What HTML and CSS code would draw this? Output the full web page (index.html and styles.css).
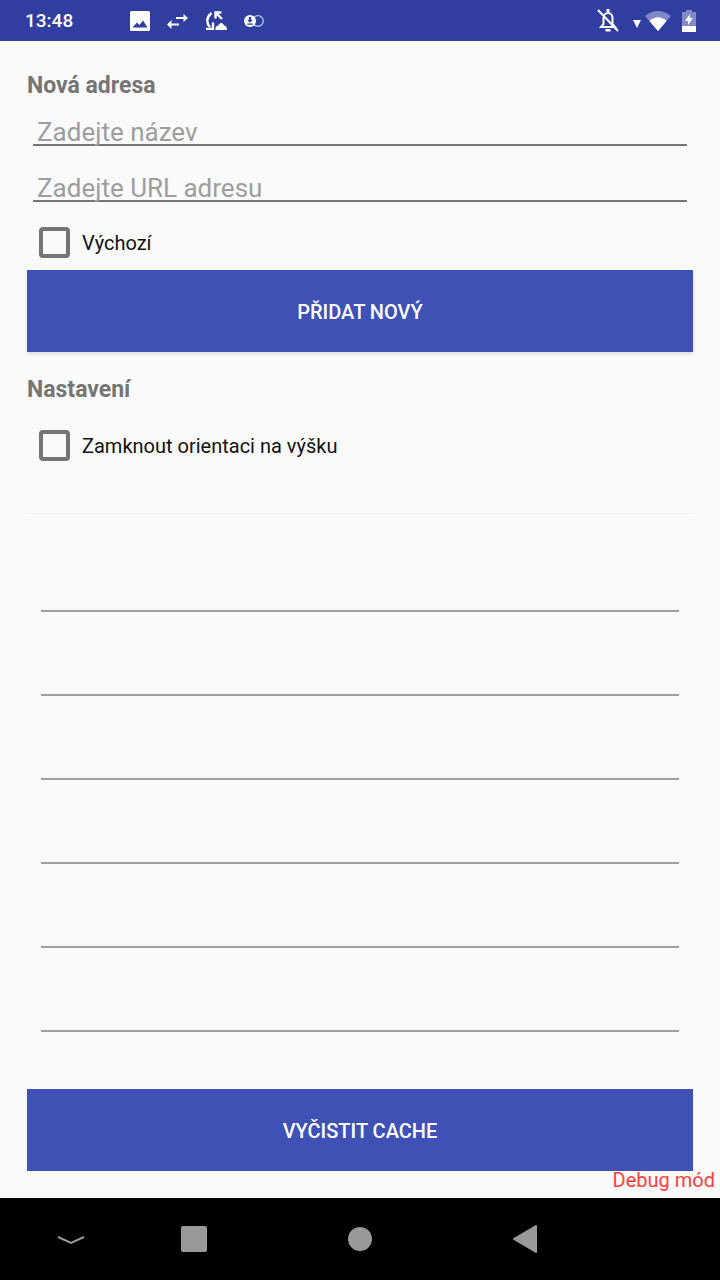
FILE: index.html

```html
<!DOCTYPE html>
<html lang="cs">
<head>
  <meta charset="UTF-8" />
  <meta name="viewport" content="width=device-width, initial-scale=1.0" />
  <title>Nastavení</title>
  <link rel="stylesheet" href="styles.css">
</head>
<body>
  <div class="status-bar">
    <span class="clock">13:48</span>
    <div class="status-left">
      <svg width="20" height="20" viewBox="0 0 20 20"><path fill="#fff" fill-rule="evenodd" d="M1.500 0h17A1.500 1.500 0 0 1 20 1.500v17a1.500 1.500 0 0 1-1.500 1.500h-17A1.500 1.500 0 0 1 0 18.500v-17A1.500 1.500 0 0 1 1.500 0zM2.500 16.500h15L13 9.500l-3.500 4.500-2.500-2.500z"/></svg>
      <svg width="21" height="16" viewBox="0 0 21 16"><path fill="none" stroke="#fff" stroke-width="2" d="M9 5h9M3 11.500h9"/><path fill="#fff" d="M16.500 1L21 5l-4.500 4zM4.500 7L0 11.500 4.500 16z"/></svg>
      <svg width="22" height="19" viewBox="0 0 22 19"><path fill="none" stroke="#fff" stroke-width="2.400" d="M6.500 2C1.500 6 1 12 5 16M1 18h7v-6.500M16.500 1.500H10.500v6M11 2l6 6"/><path fill="#fff" d="M10.500 19c-.5-3 1-4.500 3-4.500 .5-3.500 5-3.500 5.500 0 2 0 3 2 3 4.500z"/></svg>
      <svg width="20" height="12" viewBox="0 0 20 12"><circle cx="14" cy="6" r="5.300" fill="none" stroke="#c5cae9" stroke-width="1.200"/><circle cx="6" cy="6" r="6" fill="#fff"/><path fill="#303f9f" d="M4.800 2h2.400v3h1.600L6 7.800 3.200 5h1.600zM3.200 8.500h5.600v1.200H3.200z"/></svg>
    </div>
    <div class="status-right">
      <svg width="22" height="23" viewBox="0 0 22 23"><path fill="none" stroke="#fff" stroke-width="2" d="M4 18h14l-2.500-3V9c0-3-2-5-4.500-5S6.500 6 6.500 9v6zM1 1l20 21"/><path fill="#fff" d="M9.500 0h3v3h-3zM8.500 20h5v2.500h-5z"/></svg>
      <svg class="icon-drop" width="8" height="8" viewBox="0 0 8 8"><path fill="#fff" d="M0 0h8L4 8z"/></svg>
      <svg class="icon-wifi" width="26" height="21" viewBox="0 0 26 21"><path fill="#7f8ac6" d="M0 6Q13-4 26 6L13 21z"/><path fill="#fff" d="M4.500 11Q13 3.500 21.500 11L13 21z"/></svg>
      <svg class="icon-battery" width="14" height="22" viewBox="0 0 14 22"><path fill="#7f8ac6" d="M4 0h6v2h4v15H0V2h4z"/><path fill="#fff" d="M0 16h14v6H0zM8 4L3 11h3v4l5-7H8z"/></svg>
    </div>
  </div>

  <div class="screen">
    <h2 class="section-title">Nová adresa</h2>
    <div class="field"><span class="hint">Zadejte název</span></div>
    <div class="field"><span class="hint">Zadejte URL adresu</span></div>
    <label class="check-row"><span class="box"></span>Výchozí</label>
    <button class="btn">PŘIDAT NOVÝ</button>

    <h2 class="section-title second">Nastavení</h2>
    <label class="check-row lock-row"><span class="box"></span>Zamknout orientaci na výšku</label>
    <div class="divider"></div>

    <div class="lines">
      <div class="line"></div>
      <div class="line"></div>
      <div class="line"></div>
      <div class="line"></div>
      <div class="line"></div>
      <div class="line"></div>
    </div>

    <button class="btn clear-btn">VYČISTIT CACHE</button>
    <div class="debug">Debug mód</div>
  </div>

  <div class="nav-bar">
    <svg width="28" height="12" viewBox="0 0 28 12"><path fill="none" stroke="#999" stroke-width="2" d="M1 2l13 6 13-6"/></svg>
    <div class="nav-square"></div>
    <div class="nav-circle"></div>
    <svg width="26" height="30" viewBox="0 0 26 30"><path fill="#999" stroke="#999" stroke-width="2" stroke-linejoin="round" d="M24 2v26L2 15z"/></svg>
  </div>
</body>
</html>
```

FILE: styles.css

```css
* {
  box-sizing: border-box;
}

body {
  margin: 0;
  width: 720px;
  height: 1280px;
  display: flex;
  flex-direction: column;
  font-family: Roboto, sans-serif;
  background-color: #fafafa;
  overflow: hidden;
}

.status-bar {
  height: 41px;
  background-color: #303f9f;
  display: flex;
  align-items: center;
  padding: 0 24px 0 25px;
  color: white;
  opacity: 0.999;
}

.clock {
  font-size: 19px;
  font-weight: 500;
  width: 105px;
}

.status-left {
  display: flex;
  align-items: center;
  gap: 17px;
}

.status-right {
  margin-left: auto;
  display: flex;
  align-items: center;
}

.icon-drop {
  margin: 7px 0 0 14px;
}

.icon-wifi {
  margin-left: 4px;
}

.icon-battery {
  margin-left: 11px;
}

.screen {
  height: 1157px;
  padding: 0 27px;
  display: flex;
  flex-direction: column;
  opacity: 0.999;
}

.section-title {
  margin: 31px 0 0;
  height: 28px;
  line-height: 28px;
  font-size: 23px;
  font-weight: 700;
  color: #757575;
}

.section-title.second {
  margin-top: 24px;
}

.field {
  margin: 0 6px;
  height: 56px;
  padding: 0 4px;
  border-bottom: 2px solid #757575;
  display: flex;
  align-items: flex-end;
}

.field:first-of-type {
  height: 46px;
}

.hint {
  font-size: 26px;
  line-height: 30px;
  margin-bottom: -3px;
  color: #9e9e9e;
}

.check-row {
  display: flex;
  align-items: center;
  height: 68px;
  padding: 13px 0 0 12px;
  font-size: 20px;
  color: #111;
}

.box {
  width: 31px;
  height: 31px;
  margin-right: 12px;
  border: 4px solid #757575;
  border-radius: 4px;
}

.btn {
  display: block;
  width: 100%;
  height: 82px;
  flex-shrink: 0;
  border: none;
  padding: 2px 0 0;
  background-color: #3f51b5;
  color: white;
  font-family: Roboto, sans-serif;
  font-size: 20px;
  font-weight: 500;
  box-shadow: 0 2px 4px rgba(0, 0, 0, 0.12);
}

.lock-row {
  margin-top: 2px;
  height: 67px;
  padding-top: 12px;
}

.divider {
  margin-top: 40px;
  height: 1px;
  background-color: #f0f0f0;
}

.lines {
  padding: 14px 14px 0;
}

.line {
  height: 84px;
  border-bottom: 2px solid #9e9e9e;
}

.clear-btn {
  margin-top: 57px;
  box-shadow: none;
}

.debug {
  margin: -3px -22px 0 0;
  text-align: right;
  font-size: 20px;
  line-height: 24px;
  color: #ff4040;
}

.nav-bar {
  height: 82px;
  background-color: black;
  display: flex;
  align-items: center;
  padding-left: 57px;
}

.nav-bar svg:first-child {
  margin-right: 96px;
  margin-top: 4px;
}

.nav-square {
  width: 26px;
  height: 26px;
  background-color: #999;
  border-radius: 2px;
  margin-right: 141px;
}

.nav-circle {
  width: 24px;
  height: 24px;
  background-color: #999;
  border-radius: 50%;
  margin-right: 140px;
}
```
